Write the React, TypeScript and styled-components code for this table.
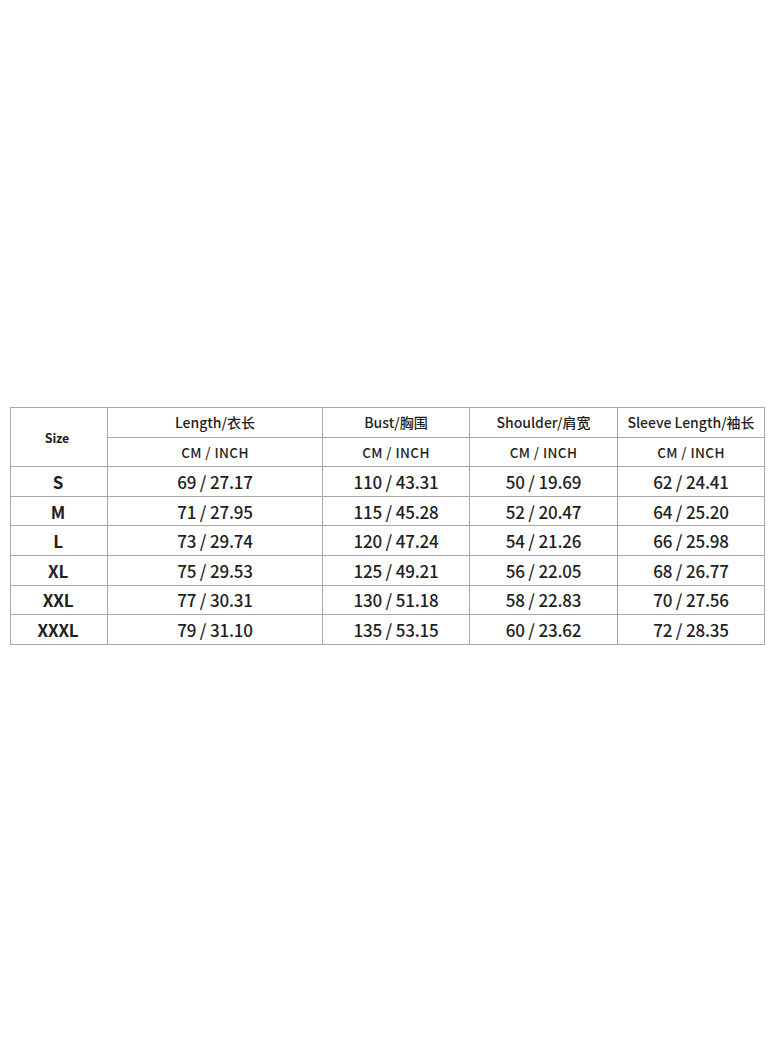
import styled, { createGlobalStyle } from "styled-components";

const GlobalStyle = createGlobalStyle`
  html, body {
    margin: 0;
    padding: 0;
    background: #ffffff;
  }
  body {
    font-family: "Noto Sans CJK SC", "Noto Sans", sans-serif;
    color: #1f1f1f;
  }
`;

const Page = styled.div`
  width: 774px;
  height: 1055px;
  padding: 407px 0 0 10px;
  box-sizing: border-box;
`;

const Table = styled.table`
  border-collapse: collapse;
  table-layout: fixed;
  width: 754px;
`;

const Cell = styled.td<{ $head?: boolean }>`
  border: 1.5px solid #a8a8a8;
  height: 28.6px;
  padding: 0;
  text-align: center;
  vertical-align: middle;
  white-space: nowrap;
  font-size: ${(p) => (p.$head ? "14px" : "17px")};
  font-weight: 500;
  letter-spacing: ${(p) => (p.$head ? "0" : "-0.2px")};
`;

const SizeCell = styled(Cell)`
  font-size: 12.5px;
  font-weight: 700;
  padding-right: 4px;
`;

const SizeLabel = styled(Cell)`
  font-weight: 700;
  padding-right: 2px;
`;

const UnitCell = styled(Cell)`
  font-size: 13.5px;
  letter-spacing: 0.4px;
`;

const columns = ["Length/衣长", "Bust/胸围", "Shoulder/肩宽", "Sleeve Length/袖长"];
const widths = [97, 215, 147, 148, 147];

const rows: [string, string, string, string, string][] = [
  ["S", "69 / 27.17", "110 / 43.31", "50 / 19.69", "62 / 24.41"],
  ["M", "71 / 27.95", "115 / 45.28", "52 / 20.47", "64 / 25.20"],
  ["L", "73 / 29.74", "120 / 47.24", "54 / 21.26", "66 / 25.98"],
  ["XL", "75 / 29.53", "125 / 49.21", "56 / 22.05", "68 / 26.77"],
  ["XXL", "77 / 30.31", "130 / 51.18", "58 / 22.83", "70 / 27.56"],
  ["XXXL", "79 / 31.10", "135 / 53.15", "60 / 23.62", "72 / 28.35"],
];

export default function App() {
  return (
    <>
      <GlobalStyle />
      <Page>
        <Table>
          <colgroup>
            {widths.map((w, i) => (
              <col key={i} style={{ width: w }} />
            ))}
          </colgroup>
          <thead>
            <tr>
              <SizeCell as="th" rowSpan={2}>
                Size
              </SizeCell>
              {columns.map((c) => (
                <Cell as="th" $head key={c}>
                  {c}
                </Cell>
              ))}
            </tr>
            <tr>
              {columns.map((c) => (
                <UnitCell as="th" $head key={c}>
                  CM / INCH
                </UnitCell>
              ))}
            </tr>
          </thead>
          <tbody>
            {rows.map((r) => (
              <tr key={r[0]}>
                <SizeLabel>{r[0]}</SizeLabel>
                {r.slice(1).map((v, i) => (
                  <Cell key={i}>{v}</Cell>
                ))}
              </tr>
            ))}
          </tbody>
        </Table>
      </Page>
    </>
  );
}
